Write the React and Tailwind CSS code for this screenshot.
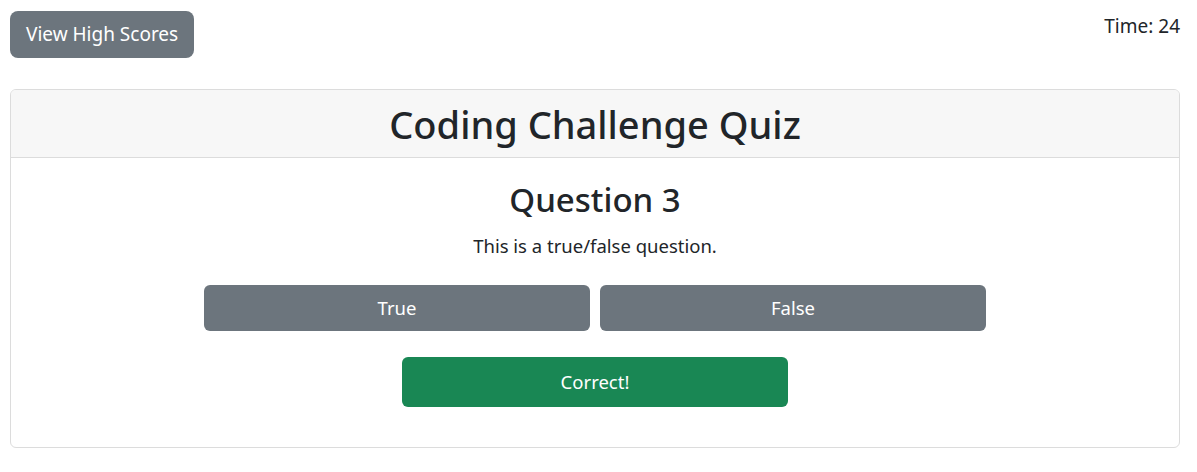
export default function App() {
    return (
        <div className="min-h-screen bg-white text-[#212529]" style={{ fontFamily: '"Noto Sans", "Open Sans", sans-serif' }}>
            {/* Top bar */}
            <div className="flex items-start justify-between pl-[10px] pr-[17px] pt-[11px]">
                <button className="h-[47px] px-4 bg-[#6c757d] text-white text-[19px] rounded-lg leading-none">View High Scores</button>
                <p className="text-[19px] leading-[30px]">Time: 24</p>
            </div>

            {/* Quiz card */}
            <div className="ml-[10px] mr-[17px] mt-[31px] border border-[#dcdcdc] rounded-md overflow-hidden">
                <div className="h-[68px] bg-[#f7f7f7] border-b border-[#dcdcdc] flex items-center justify-center">
                    <h1 className="text-[38px] font-medium leading-none">Coding Challenge Quiz</h1>
                </div>
                <div className="flex flex-col items-center pt-[23px] pb-[40px]">
                    <h2 className="text-[33px] font-medium leading-[38px]">Question 3</h2>
                    <p className="text-[18.5px] leading-[27px] mt-[13px]">This is a true/false question.</p>
                    <div className="flex gap-[10px] mt-[26px]">
                        <button className="w-[386px] h-[46px] bg-[#6c757d] text-white text-[18.5px] rounded-md">True</button>
                        <button className="w-[386px] h-[46px] bg-[#6c757d] text-white text-[18.5px] rounded-md">False</button>
                    </div>
                    <button className="w-[386px] h-[50px] mt-[26px] bg-[#198754] text-white text-[18.5px] rounded-md">Correct!</button>
                </div>
            </div>
        </div>
    );
}
